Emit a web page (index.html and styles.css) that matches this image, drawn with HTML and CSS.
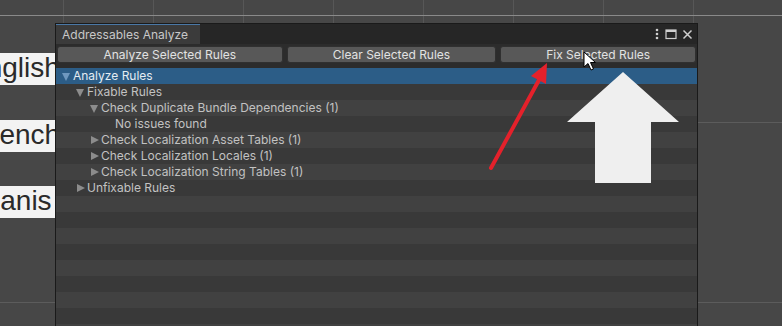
FILE: index.html
```
<!DOCTYPE html>
<html lang="en">
<head>
    <meta charset="UTF-8">
    <meta name="viewport" content="width=device-width, initial-scale=1.0">
    <title>Addressables Analyze</title>
    <link rel="stylesheet" href="styles.css">
</head>
<body>

    <!-- scene view behind the editor window -->
    <div class="scene">
        <div class="label label-en"><span>English</span></div>
        <div class="label label-fr"><span>French</span></div>
        <div class="label label-es"><span>Spanish</span></div>
    </div>

    <div class="window">
        <div class="titlebar">
            <div class="tab">Addressables Analyze</div>
            <div class="title-icons">
                <svg width="6" height="14" viewBox="0 0 6 14"><circle cx="3" cy="3" r="1.3" fill="#d0d0d0"/><circle cx="3" cy="7" r="1.3" fill="#d0d0d0"/><circle cx="3" cy="11" r="1.3" fill="#d0d0d0"/></svg>
                <svg width="12" height="12" viewBox="0 0 12 12"><rect x="1" y="2" width="10" height="8.5" fill="none" stroke="#d0d0d0" stroke-width="1.2"/><rect x="1" y="2" width="10" height="2" fill="#d0d0d0"/></svg>
                <svg width="11" height="11" viewBox="0 0 11 11"><path d="M1.5 1.5 L9.5 9.5 M9.5 1.5 L1.5 9.5" stroke="#d0d0d0" stroke-width="1.5"/></svg>
            </div>
        </div>

        <div class="toolbar">
            <button class="btn btn-analyze">Analyze Selected Rules</button>
            <button class="btn btn-clear">Clear Selected Rules</button>
            <button class="btn btn-fix">Fix Selected Rules</button>
        </div>

        <div class="tree">
            <div class="row selected lvl0"><span class="arrow open"></span>Analyze Rules</div>
            <div class="row lvl1"><span class="arrow open"></span>Fixable Rules</div>
            <div class="row lvl2"><span class="arrow open"></span>Check Duplicate Bundle Dependencies (1)</div>
            <div class="row lvl3"><span class="arrow none"></span>No issues found</div>
            <div class="row lvl2"><span class="arrow closed"></span>Check Localization Asset Tables (1)</div>
            <div class="row lvl2"><span class="arrow closed"></span>Check Localization Locales (1)</div>
            <div class="row lvl2"><span class="arrow closed"></span>Check Localization String Tables (1)</div>
            <div class="row lvl1"><span class="arrow closed"></span>Unfixable Rules</div>
            <div class="row"></div>
            <div class="row"></div>
            <div class="row"></div>
            <div class="row"></div>
            <div class="row"></div>
            <div class="row"></div>
            <div class="row"></div>
            <div class="row"></div>
            <div class="row"></div>
        </div>
    </div>

    <!-- annotations drawn over the screenshot -->
    <svg class="overlay" width="782" height="326" viewBox="0 0 782 326">
        <line x1="491" y1="168" x2="539" y2="80" stroke="#e4212b" stroke-width="4" stroke-linecap="round"/>
        <polygon points="547,63 546,84 531,76" fill="#e4212b"/>
        <polygon points="623,72 679,122 651,122 651,183 595,183 595,122 567,122" fill="#efefef"/>
        <path d="M584 52 L584 67 L588 63.5 L591 70 L593.5 69 L590.5 62.5 L595.5 62.5 Z" fill="#fff" stroke="#000" stroke-width="1"/>
    </svg>

</body>
</html>
```

FILE: styles.css
```
body {
    margin: 0;
    width: 782px;
    height: 326px;
    overflow: hidden;
    position: relative;
    font-family: "Inter", "Noto Sans", sans-serif;
    font-size: 12px;
    background-color: #474747;
    background-image:
        linear-gradient(#8a8a8a, #8a8a8a),
        linear-gradient(#5c5c5c, #5c5c5c),
        linear-gradient(#5c5c5c, #5c5c5c),
        linear-gradient(to right, #575757 1px, transparent 1px);
    background-size: 100% 1px, 100% 1px, 100% 1px, 90px 100%;
    background-position: 0 15px, 0 122px, 0 302px, 63px 0;
    background-repeat: no-repeat, no-repeat, no-repeat, repeat-x;
}

.scene {
    display: flex;
    flex-direction: column;
    gap: 34px;
    padding-top: 53px;
}
.label {
    width: 56px;
    height: 32px;
    background: #f3f3f3;
    color: #2a2a2a;
    font-family: "Liberation Sans", Arial, sans-serif;
    font-size: 28px;
    line-height: 30px;
    white-space: nowrap;
    overflow: hidden;
}
.label-en span { margin-left: -32px; }
.label-fr span { margin-left: -27px; }
.label-es span {
    display: inline-block;
    width: 86px;
    overflow: hidden;
    vertical-align: top;
    margin-left: -34px;
}
.label-fr { margin-top: 1px; }

.window {
    position: absolute;
    left: 55px;
    top: 23px;
    width: 641px;
    height: 320px;
    border: 1px solid #1a1a1a;
    background: #3a3a3a;
}

.titlebar {
    display: flex;
    height: 20px;
    background: #262626;
}
.tab {
    width: 138px;
    padding-left: 6px;
    background: #3b3b3b;
    border-top: 1px solid #4a78a6;
    color: #c8c8c8;
    line-height: 19px;
}
.title-icons {
    margin-left: auto;
    display: flex;
    align-items: center;
    gap: 5px;
    padding-right: 4px;
}

.toolbar {
    display: flex;
    gap: 4px;
    height: 24px;
    padding: 2px 1px 0;
    box-sizing: border-box;
    background: #2c2c2c;
}
.btn {
    height: 17px;
    padding: 0;
    background: #585858;
    border: 1px solid #303030;
    border-radius: 3px;
    color: #e2e2e2;
    font-family: "Inter", "Noto Sans", sans-serif;
    font-size: 12px;
    line-height: 14px;
}
.btn-analyze { width: 226px; }
.btn-clear { width: 210px; }
.btn-fix { width: 196px; }

.row {
    display: flex;
    align-items: center;
    height: 16px;
    line-height: 16px;
    color: #c2c2c2;
    white-space: nowrap;
    background: #414141;
}
.row:nth-child(even) {
    background: #393939;
}
.row.selected {
    background: #2c5d87;
    color: #e4ecf3;
}
.lvl0 { padding-left: 6px; }
.lvl1 { padding-left: 20px; }
.lvl2 { padding-left: 34px; }
.lvl3 { padding-left: 48px; }

.arrow {
    width: 11px;
    height: 16px;
    flex-shrink: 0;
    position: relative;
}
.arrow.open::before {
    content: "";
    position: absolute;
    left: 0;
    top: 5px;
    border-left: 4.5px solid transparent;
    border-right: 4.5px solid transparent;
    border-top: 8px solid #8c8c8c;
}
.arrow.closed::before {
    content: "";
    position: absolute;
    left: 1px;
    top: 4px;
    border-top: 4.5px solid transparent;
    border-bottom: 4.5px solid transparent;
    border-left: 8px solid #8c8c8c;
}
.selected .arrow.open::before {
    border-top-color: #6f98bf;
}

.overlay {
    position: absolute;
    left: 0;
    top: 0;
    pointer-events: none;
}
```
